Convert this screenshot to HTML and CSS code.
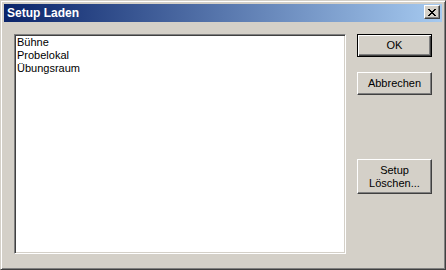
FILE: index.html
```html
<!DOCTYPE html>
<html lang="de">
<head>
    <meta charset="UTF-8">
    <title>Setup Laden</title>
    <link rel="stylesheet" href="styles.css">
</head>
<body>

    <div class="window">
        <div class="titlebar">
            <span class="title">Setup Laden</span>
            <button class="close" aria-label="Schließen">
                <svg width="8" height="7" viewBox="0 0 8 7" shape-rendering="crispEdges">
                    <path d="M0 0h2v1h-2z M6 0h2v1h-2z M1 1h2v1h-2z M5 1h2v1h-2z M2 2h4v1h-4z M3 3h2v1h-2z M2 4h4v1h-4z M1 5h2v1h-2z M5 5h2v1h-2z M0 6h2v1h-2z M6 6h2v1h-2z" fill="#000"/>
                </svg>
            </button>
        </div>

        <div class="content">
            <div class="listbox">
                <div class="item">Bühne</div>
                <div class="item">Probelokal</div>
                <div class="item">Übungsraum</div>
            </div>

            <div class="actions">
                <button class="btn default">OK</button>
                <button class="btn">Abbrechen</button>
                <button class="btn tall">Setup<br>Löschen...</button>
            </div>
        </div>
    </div>

</body>
</html>
```

FILE: styles.css
```css
body {
    margin: 0;
    background: #d4d0c8;
    font-family: "Liberation Sans", Arial, sans-serif;
    font-size: 11px;
}

.window {
    box-sizing: border-box;
    width: 446px;
    height: 270px;
    display: flex;
    flex-direction: column;
    padding: 3px;
    background: #d4d0c8;
    border: 1px solid;
    border-color: #d4d0c8 #404040 #404040 #d4d0c8;
    box-shadow: inset 1px 1px #fff, inset -1px -1px #808080;
}

.titlebar {
    height: 18px;
    display: flex;
    align-items: flex-start;
    justify-content: space-between;
    background: linear-gradient(to right, #0a246a, #a6caf0);
}

.title {
    padding-left: 3px;
    line-height: 18px;
    font-size: 12px;
    font-weight: bold;
    color: #fff;
}

.close {
    box-sizing: border-box;
    width: 16px;
    height: 14px;
    margin: 1px 2px 0 0;
    padding: 0;
    display: flex;
    align-items: center;
    justify-content: center;
    background: #d4d0c8;
    border: 1px solid;
    border-color: #fff #404040 #404040 #fff;
    box-shadow: inset -1px -1px #808080;
}

.content {
    display: flex;
    gap: 11px;
    padding: 12px 10px 0 10px;
}

.listbox {
    box-sizing: border-box;
    width: 332px;
    height: 220px;
    padding: 1px;
    background: #fff;
    border: 1px solid;
    border-color: #808080 #fff #fff #808080;
    box-shadow: inset 1px 1px #404040, inset -1px -1px #d4d0c8;
}

.item {
    padding-left: 1px;
    line-height: 13px;
    color: #000;
}

.actions {
    width: 75px;
    display: flex;
    flex-direction: column;
}

.btn {
    box-sizing: border-box;
    width: 75px;
    height: 23px;
    margin-bottom: 15px;
    padding: 0;
    font-family: inherit;
    font-size: 11px;
    line-height: 13px;
    color: #000;
    background: #d4d0c8;
    border: 1px solid;
    border-color: #fff #404040 #404040 #fff;
    box-shadow: inset -1px -1px #808080;
}

.btn.default {
    border-color: #000;
    box-shadow: inset 1px 1px #fff, inset -1px -1px #404040, inset -2px -2px #808080;
}

.btn.tall {
    height: 35px;
    margin-top: 49px;
}
```
